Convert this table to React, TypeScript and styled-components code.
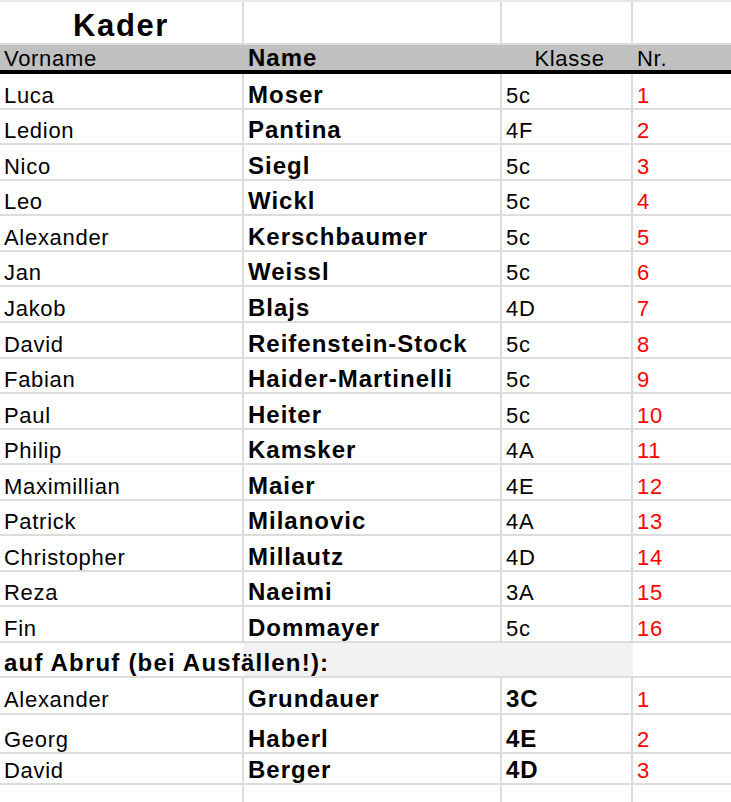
import styled, { createGlobalStyle } from 'styled-components';

type Player = { first: string; last: string; cls: string; nr: number };

const squad: Player[] = [
	{ first: 'Luca', last: 'Moser', cls: '5c', nr: 1 },
	{ first: 'Ledion', last: 'Pantina', cls: '4F', nr: 2 },
	{ first: 'Nico', last: 'Siegl', cls: '5c', nr: 3 },
	{ first: 'Leo', last: 'Wickl', cls: '5c', nr: 4 },
	{ first: 'Alexander', last: 'Kerschbaumer', cls: '5c', nr: 5 },
	{ first: 'Jan', last: 'Weissl', cls: '5c', nr: 6 },
	{ first: 'Jakob', last: 'Blajs', cls: '4D', nr: 7 },
	{ first: 'David', last: 'Reifenstein-Stock', cls: '5c', nr: 8 },
	{ first: 'Fabian', last: 'Haider-Martinelli', cls: '5c', nr: 9 },
	{ first: 'Paul', last: 'Heiter', cls: '5c', nr: 10 },
	{ first: 'Philip', last: 'Kamsker', cls: '4A', nr: 11 },
	{ first: 'Maximillian', last: 'Maier', cls: '4E', nr: 12 },
	{ first: 'Patrick', last: 'Milanovic', cls: '4A', nr: 13 },
	{ first: 'Christopher', last: 'Millautz', cls: '4D', nr: 14 },
	{ first: 'Reza', last: 'Naeimi', cls: '3A', nr: 15 },
	{ first: 'Fin', last: 'Dommayer', cls: '5c', nr: 16 },
];

// reserve players, each row has its own height in the sheet
const reserve: (Player & { h: number; pb: number })[] = [
	{ first: 'Alexander', last: 'Grundauer', cls: '3C', nr: 1, h: 37, pb: 2 },
	{ first: 'Georg', last: 'Haberl', cls: '4E', nr: 2, h: 39, pb: 1 },
	{ first: 'David', last: 'Berger', cls: '4D', nr: 3, h: 31, pb: 1 },
];

function App() {
	return (
		<>
			<GlobalStyle />
			<StyledSheet>
				<StyledRow $h={43}>
					<StyledTitle>Kader</StyledTitle>
					<StyledCell />
					<StyledCell />
					<StyledCell />
				</StyledRow>

				<StyledHeaderRow $h={31}>
					<StyledHeadCell>Vorname</StyledHeadCell>
					<StyledHeadCell $bold>Name</StyledHeadCell>
					<StyledHeadCell $center>Klasse</StyledHeadCell>
					<StyledHeadCell>Nr.</StyledHeadCell>
				</StyledHeaderRow>

				{squad.map((p) => (
					<StyledRow key={p.nr} $h={35.5625}>
						<StyledCell>{p.first}</StyledCell>
						<StyledCell $bold>{p.last}</StyledCell>
						<StyledCell>{p.cls}</StyledCell>
						<StyledCell $red>{p.nr}</StyledCell>
					</StyledRow>
				))}

				<StyledRow $h={35}>
					<StyledSectionLabel>auf Abruf (bei Ausfällen!):</StyledSectionLabel>
					<StyledCell />
				</StyledRow>

				{reserve.map((p) => (
					<StyledRow key={p.nr} $h={p.h}>
						<StyledCell $pb={p.pb}>{p.first}</StyledCell>
						<StyledCell $pb={p.pb} $bold>
							{p.last}
						</StyledCell>
						<StyledCell $pb={p.pb} $bold>
							{p.cls}
						</StyledCell>
						<StyledCell $pb={p.pb} $red>
							{p.nr}
						</StyledCell>
					</StyledRow>
				))}

				<StyledRow $h={35}>
					<StyledCell />
					<StyledCell />
					<StyledCell />
					<StyledCell />
				</StyledRow>
			</StyledSheet>
		</>
	);
}

const GRID = '#dcdcdc';

const GlobalStyle = createGlobalStyle`
	body {
		margin: 0;
		background: #fff;
		font-family: 'Liberation Sans', Arial, sans-serif;
		color: #000;
	}
`;

const StyledSheet = styled.div`
	width: 731px;
	border-top: 2px solid #e6e6e6;
	overflow: hidden;
`;

const StyledRow = styled.div<{ $h: number }>`
	display: grid;
	grid-template-columns: 244px 258px 131px 98px;
	height: ${(p) => p.$h}px;
	box-sizing: border-box;
`;

const StyledHeaderRow = styled(StyledRow)`
	background: #c0c0c0;
	border-bottom: 4px solid #000;
	height: 29px;
`;

const StyledCell = styled.div<{
	$bold?: boolean;
	$red?: boolean;
	$pb?: number;
}>`
	display: flex;
	align-items: flex-end;
	box-sizing: border-box;
	padding: 0 0 ${(p) => p.$pb ?? 1}px 4px;
	border-right: 2px solid ${GRID};
	border-bottom: 2px solid ${GRID};
	white-space: nowrap;
	line-height: 1;
	font-size: ${(p) => (p.$bold ? 24 : 22)}px;
	font-weight: ${(p) => (p.$bold ? 700 : 400)};
	letter-spacing: ${(p) => (p.$bold ? 1 : 0.7)}px;
	color: ${(p) => (p.$red ? '#ff0000' : '#000')};

	&:last-child {
		border-right: none;
	}
`;

const StyledTitle = styled(StyledCell)`
	justify-content: center;
	padding: 0 0 2px;
	font-size: 31px;
	font-weight: 700;
	letter-spacing: 1.6px;
`;

const StyledHeadCell = styled.div<{ $bold?: boolean; $center?: boolean }>`
	display: flex;
	align-items: flex-end;
	justify-content: ${(p) => (p.$center ? 'center' : 'flex-start')};
	padding: 0 0 0 4px;
	line-height: 1;
	font-size: ${(p) => (p.$bold ? 24 : 22)}px;
	font-weight: ${(p) => (p.$bold ? 700 : 400)};
	letter-spacing: ${(p) => (p.$bold ? 1 : 0.7)}px;
`;

const StyledSectionLabel = styled(StyledCell)`
	grid-column: span 3;
	border-right: none;
	font-size: 24px;
	font-weight: 700;
	letter-spacing: 1.2px;
	background: linear-gradient(to right, #fff 244px, #f2f2f2 244px);
`;

export default App;
